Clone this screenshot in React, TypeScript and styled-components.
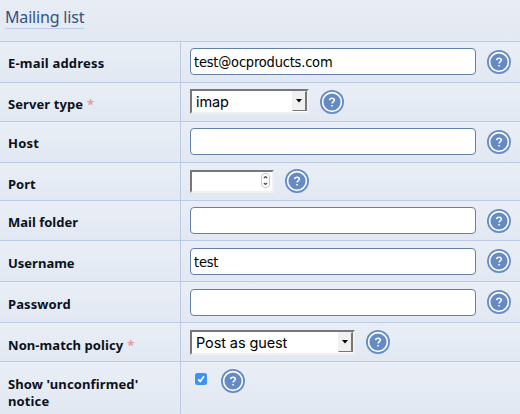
import React from 'react';
import styled, { createGlobalStyle } from 'styled-components';

const GlobalStyle = createGlobalStyle`
  * { box-sizing: border-box; }
  body {
    margin: 0;
    overflow: hidden;
    background: #e6ebf4;
    font-family: "DejaVu Sans Condensed", "DejaVu Sans", sans-serif;
  }
`;

const Panel = styled.main`
  width: 520px;
  height: 414px;
  overflow: hidden;
`;

const Header = styled.header`
  height: 41px;
  padding: 6px 0 0 5px;
  background: linear-gradient(#e7ecf5, #e3e9f2);
`;

const Title = styled.h2`
  display: inline-block;
  margin: 0;
  width: 79px;
  height: 23px;
  border-bottom: 1px solid #bccbe8;
  color: #36517f;
  font: 400 16px/23px "Noto Sans", sans-serif;
  letter-spacing: -0.18px;
  white-space: nowrap;
`;

const Row = styled.div<{ $height: number }>`
  display: grid;
  grid-template-columns: 180px 1fr;
  height: ${(p) => p.$height}px;
  border-top: 1px solid #bccae3;
  background: linear-gradient(#e9eef6, #e2e8f2);
`;

const LabelCell = styled.div<{ $top: number }>`
  padding: ${(p) => p.$top}px 20px 0 8px;
  color: #0b111b;
  font: 700 13px/17px "Noto Sans", sans-serif;
`;

const LabelText = styled.span<{ $spacing: number }>`
  letter-spacing: ${(p) => p.$spacing}px;
`;

const Required = styled.span`
  margin-left: 4px;
  color: #e79aa2;
  font-weight: 700;
`;

const FieldCell = styled.div<{ $top: number }>`
  display: flex;
  align-items: flex-start;
  gap: 11px;
  padding: ${(p) => p.$top}px 0 0 9px;
  border-left: 1px solid #bccae3;
`;

const TextInput = styled.input`
  width: 286px;
  height: 27px;
  margin: 0;
  padding: 1px 3px 0;
  border: 1px solid #647fa8;
  border-radius: 4px;
  background: #fff;
  color: #000;
  outline: none;
  font: 14.5px "DejaVu Sans Condensed", "DejaVu Sans", sans-serif;
  letter-spacing: -0.2px;
`;

const Inset = styled.div<{ $width: number; $height: number }>`
  display: flex;
  justify-content: space-between;
  width: ${(p) => p.$width}px;
  height: ${(p) => p.$height}px;
  border: 2px solid;
  border-color: #777 #f0f0f0 #f0f0f0 #777;
  background: #fff;
  color: #000;
  font: 14.5px/22px Inter, sans-serif;
`;

const SelectValue = styled.span<{ $spacing: number }>`
  padding-left: 4px;
  letter-spacing: ${(p) => p.$spacing}px;
  white-space: nowrap;
`;

const ArrowButton = styled.span`
  display: flex;
  align-items: center;
  justify-content: center;
  width: 15px;
  height: 20px;
  border: 1px solid;
  border-color: #f0f0f0 #777 #777 #f0f0f0;
  border-right-width: 2px;
  background: #f0f0f0;
`;

const Spinner = styled.svg`
  margin: 1px 2px 0 0;
`;

const HelpIcon = styled.svg<{ $shift: number }>`
  flex: none;
  width: 24px;
  height: 24px;
  margin-top: ${(p) => p.$shift}px;
`;

const Tick = styled.svg`
  flex: none;
  width: 12px;
  height: 12px;
  margin: 4px 3px 0 5px;
`;

function Help({ shift = 2 }: { shift?: number }) {
  return (
    <HelpIcon $shift={shift} viewBox="0 0 24 24" role="img" aria-label="Help">
      <circle cx="12" cy="12" r="12" fill="#648bc4" />
      <circle cx="12" cy="12" r="9.4" fill="none" stroke="#fff" strokeWidth="1.6" />
      <path
        d="M9.6 10.1c.1-1.2 1-1.9 2.4-1.9 1.4 0 2.4.7 2.4 1.8 0 1.6-2.3 1.7-2.3 3.6"
        fill="none"
        stroke="#fff"
        strokeWidth="1.5"
      />
      <rect x="11.3" y="15" width="1.6" height="1.5" fill="#fff" />
    </HelpIcon>
  );
}

function Select({ value, width, height, spacing }: { value: string; width: number; height: number; spacing: number }) {
  return (
    <Inset $width={width} $height={height}>
      <SelectValue $spacing={spacing}>{value}</SelectValue>
      <ArrowButton>
        <svg width="6" height="4" viewBox="0 0 6 4"><path d="M0 0h6L3 3.5z" fill="#000" /></svg>
      </ArrowButton>
    </Inset>
  );
}

type FieldProps = {
  label: string;
  height: number;
  labelTop: number;
  fieldTop: number;
  spacing?: number;
  required?: boolean;
  children: React.ReactNode;
};

function Field({ label, height, labelTop, fieldTop, spacing = 0, required, children }: FieldProps) {
  return (
    <Row $height={height}>
      <LabelCell $top={labelTop}>
        <LabelText $spacing={spacing}>{label}</LabelText>
        {required && <Required>*</Required>}
      </LabelCell>
      <FieldCell $top={fieldTop}>{children}</FieldCell>
    </Row>
  );
}

export default function App() {
  return (
    <Panel>
      <GlobalStyle />
      <Header><Title>Mailing list</Title></Header>
      <Field label="E-mail address" height={41} labelTop={13} fieldTop={6} spacing={0.2}>
        <TextInput defaultValue="test@ocproducts.com" /><Help />
      </Field>
      <Field label="Server type" height={39} labelTop={13} fieldTop={6} spacing={0.08} required>
        <Select value="imap" width={119} height={25} spacing={-0.1} /><Help shift={1} />
      </Field>
      <Field label="Host" height={41} labelTop={13} fieldTop={6} spacing={0.2}>
        <TextInput /><Help />
      </Field>
      <Field label="Port" height={38} labelTop={13} fieldTop={7}>
        <Inset $width={84} $height={23}>
          <span />
          <Spinner width="9" height="15" viewBox="0 0 9 15">
            <rect x=".5" y=".5" width="8" height="14" rx="3.5" fill="#fff" stroke="#c6c6c6" />
            <path d="M2.8 5.2 4.5 3.5l1.7 1.7M2.8 9.8l1.7 1.7 1.7-1.7" fill="none" stroke="#444" strokeWidth="1.2" />
          </Spinner>
        </Inset>
        <Help shift={-1} />
      </Field>
      <Field label="Mail folder" height={40} labelTop={13} fieldTop={6}>
        <TextInput /><Help />
      </Field>
      <Field label="Username" height={41} labelTop={14} fieldTop={7}>
        <TextInput defaultValue="test" /><Help shift={1} />
      </Field>
      <Field label="Password" height={41} labelTop={14} fieldTop={7} spacing={0.1}>
        <TextInput type="password" /><Help shift={1} />
      </Field>
      <Field label="Non-match policy" height={39} labelTop={14} fieldTop={7} spacing={0.06} required>
        <Select value="Post as guest" width={165} height={25} spacing={-0.1} /><Help shift={0} />
      </Field>
      <Field label="Show 'unconfirmed' notice" height={53} labelTop={14} fieldTop={7} spacing={0.12}>
        <Tick viewBox="0 0 12 12" role="img" aria-label="Checked">
          <rect width="12" height="12" rx="2.5" fill="#3b93f7" />
          <path d="M3.2 6.3 5.2 8.4 9 3.2" fill="none" stroke="#fff" strokeWidth="1.7" />
        </Tick>
        <Help shift={0} />
      </Field>
    </Panel>
  );
}
